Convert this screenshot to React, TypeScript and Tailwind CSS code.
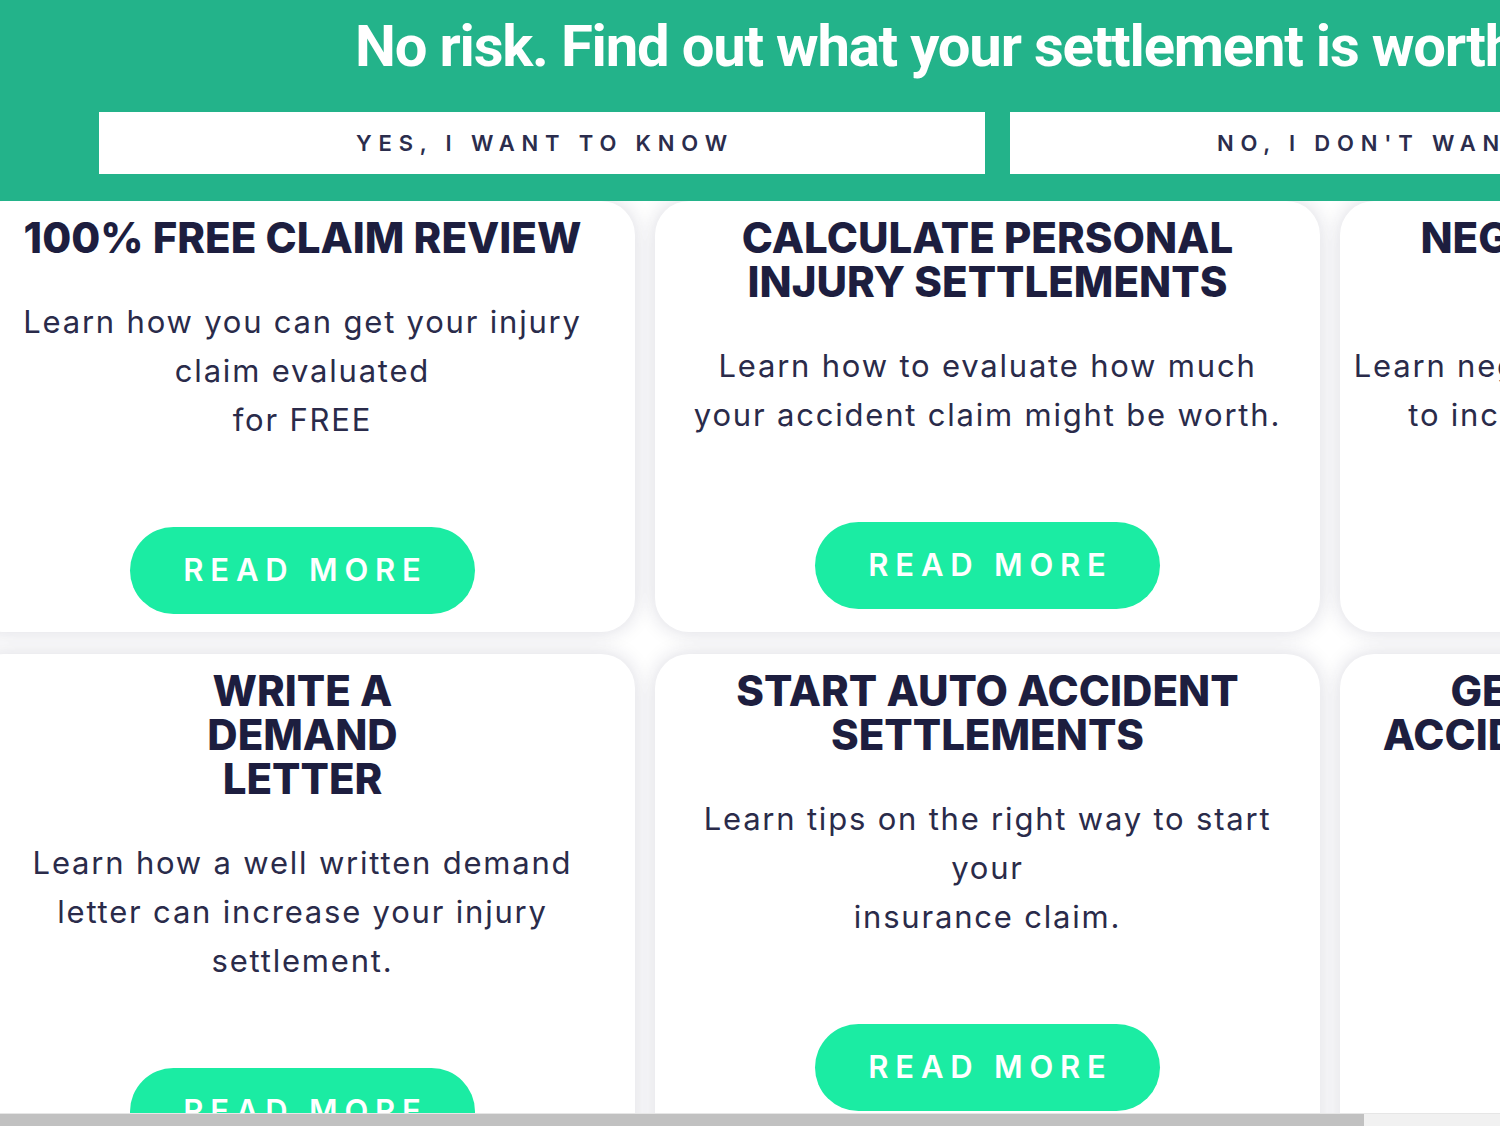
import React from "react";

type Card = { title: string[]; desc: string[] };

const row1: Card[] = [
  { title: ["100% FREE CLAIM REVIEW"], desc: ["Learn how you can get your injury", "claim evaluated", "for FREE"] },
  { title: ["CALCULATE PERSONAL", "INJURY SETTLEMENTS"], desc: ["Learn how to evaluate how much", "your accident claim might be worth."] },
  { title: ["NEGOTIATE INSURANCE", "SETTLEMENTS"], desc: ["Learn negotiation techniques you need", "to increase your final settlement"] },
];

const row2: Card[] = [
  { title: ["WRITE A", "DEMAND", "LETTER"], desc: ["Learn how a well written demand", "letter can increase your injury", "settlement."] },
  { title: ["START AUTO ACCIDENT", "SETTLEMENTS"], desc: ["Learn tips on the right way to start", "your", "insurance claim."] },
  { title: ["GET MORE FOR YOUR", "ACCIDENT COMPENSATION"], desc: ["Learn how to get", "more money."] },
];

function CardView({ c }: { c: Card }) {
  return (
    <div className="bg-white rounded-[34px] shadow-[0_0_20px_rgba(30,30,70,0.17)] pt-[15px] pb-[18px] px-[10px] flex flex-col items-center text-center">
      <h2 className="font-['Inter',sans-serif] font-extrabold text-[42px] leading-[44px] tracking-[0px] text-[#1d1e3f]">
        {c.title.map((t, i) => (
          <div key={i} className="whitespace-nowrap">{t}</div>
        ))}
      </h2>
      <p className="mt-[37px] font-['Inter',sans-serif] text-[31px] leading-[49px] tracking-[1.8px] text-[#2a2b4a]">
        {c.desc.map((t, i) => (
          <span key={i} className="block whitespace-nowrap">{t}</span>
        ))}
      </p>
      <button className="mt-[83px] w-[345px] h-[87px] pl-[6px] rounded-full bg-[#1beca3] text-white font-['Inter',sans-serif] font-semibold text-[31px] tracking-[6.8px] shrink-0">
        READ MORE
      </button>
    </div>
  );
}

export default function App() {
  return (
    <div className="w-[1500px] h-[1126px] overflow-hidden flex flex-col bg-white">
      <header className="relative z-10 h-[201px] shrink-0 bg-[#23b38a] overflow-hidden">
        <h1 className="pl-[355px] pt-[17px] whitespace-nowrap font-['Roboto',sans-serif] font-bold text-[58px] leading-[58px] tracking-[-1.2px] text-white">
          No risk. Find out what your settlement is worth
        </h1>
        <div className="mt-[37px] ml-[99px] flex gap-[25px]">
          <div className="w-[886px] h-[62px] shrink-0 bg-white flex items-center justify-center pl-[6px] font-['Inter',sans-serif] font-semibold text-[22px] tracking-[0.31em] text-[#2b2d4d]">
            YES, I WANT TO KNOW
          </div>
          <div className="w-[886px] h-[62px] shrink-0 bg-white flex items-center justify-center pl-[6px] font-['Inter',sans-serif] font-semibold text-[22px] tracking-[0.31em] text-[#2b2d4d]">
            NO, I DON'T WANT TO KNOW
          </div>
        </div>
      </header>
      <main className="flex-1 min-h-0 overflow-hidden">
        <div className="ml-[-30px] w-[2035px] grid grid-cols-[665px_665px_665px] gap-x-[20px] gap-y-[22px]">
          {row1.map((c, i) => (
            <CardView key={"a" + i} c={c} />
          ))}
          {row2.map((c, i) => (
            <CardView key={"b" + i} c={c} />
          ))}
        </div>
      </main>
      <div className="h-[13px] shrink-0 bg-[#f1f1f1] border-t border-[#e6e6e6] flex">
        <div className="w-[1364px] h-full bg-[#c1c1c1]" />
      </div>
    </div>
  );
}
